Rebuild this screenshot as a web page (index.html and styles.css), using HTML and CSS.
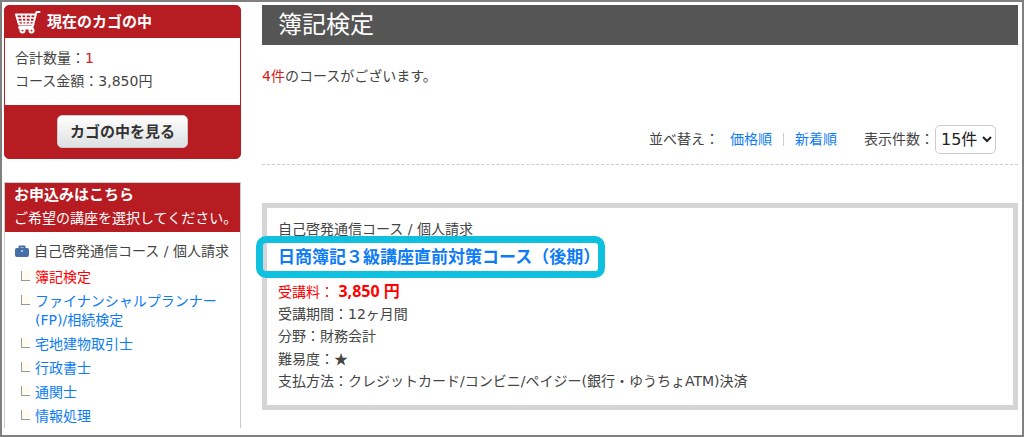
FILE: index.html
```html
<!DOCTYPE html>
<html lang="ja">
<head>
    <meta charset="UTF-8">
    <meta name="viewport" content="width=device-width, initial-scale=1.0">
    <title>簿記検定</title>
    <link rel="stylesheet" href="styles.css">
</head>
<body>

<div class="page">
    <aside class="sidebar">
        <section class="cart">
            <h2 class="cart-title">
                <svg class="cart-icon" width="26" height="24" viewBox="0 0 26 24" fill="none" stroke="#fff" stroke-width="2" stroke-linecap="round" stroke-linejoin="round">
                    <path d="M24.500 2h-3l-4 15H4.500M1 4.500h19.500M1 4.500l3 10h14.500"/>
                    <path d="M2 8h17.500M3 11.500h15.500M6.500 4.500l1.500 10M11 4.500v10M16 4.500l-1.500 10" stroke-width="1.500"/>
                    <path d="M4.500 17v1.500h13"/>
                    <circle cx="7.500" cy="20.500" r="2"/>
                    <circle cx="16.500" cy="20.500" r="2"/>
                </svg>
                現在のカゴの中
            </h2>
            <div class="cart-body">
                <div>合計数量：<span class="num">1</span></div>
                <div>コース金額：3,850円</div>
            </div>
            <div class="cart-footer">
                <button type="button" class="btn-cart">カゴの中を見る</button>
            </div>
        </section>

        <nav class="menu">
            <div class="menu-header">
                <h2>お申込みはこちら</h2>
                <p>ご希望の講座を選択してください。</p>
            </div>
            <div class="menu-body">
                <div class="menu-group">
                    <svg width="14" height="13" viewBox="0 0 14 13">
                        <path d="M4.500 3.500V1.500h5v2" fill="none" stroke="#446ea5" stroke-width="2" stroke-linejoin="round"/>
                        <rect x="0" y="3" width="14" height="9" rx="2" fill="#446ea5"/>
                        <rect x="6" y="5" width="2" height="2" fill="#a9bfdc"/>
                    </svg>
                    自己啓発通信コース / 個人請求
                </div>
                <ul class="menu-list">
                    <li><a href="#" class="current">簿記検定</a></li>
                    <li><a href="#">ファイナンシャルプランナー(FP)/相続検定</a></li>
                    <li><a href="#">宅地建物取引士</a></li>
                    <li><a href="#">行政書士</a></li>
                    <li><a href="#">通関士</a></li>
                    <li><a href="#">情報処理</a></li>
                </ul>
            </div>
        </nav>
    </aside>

    <main class="main">
        <h1>簿記検定</h1>
        <p class="count"><span class="num">4件</span>のコースがございます。</p>

        <div class="toolbar">
            <div class="sort">
                <span class="sort-label">並べ替え：</span>
                <a href="#">価格順</a>
                <span class="separator"></span>
                <a href="#">新着順</a>
            </div>
            <div class="per-page">
                <label for="perPage">表示件数：</label>
                <select id="perPage">
                    <option>15件</option>
                </select>
            </div>
        </div>

        <article class="course">
            <div>自己啓発通信コース / 個人請求</div>
            <h2 class="course-title"><a href="#">日商簿記３級講座直前対策コース（後期）</a></h2>
            <div class="price">受講料： <strong>3,850 円</strong></div>
            <div>受講期間：12ヶ月間</div>
            <div>分野：財務会計</div>
            <div>難易度：<span class="star">★</span></div>
            <div>支払方法：クレジットカード/コンビニ/ペイジー(銀行・ゆうちょATM)決済</div>
        </article>
    </main>
</div>

</body>
</html>
```
FILE: styles.css
```css
* {
    box-sizing: border-box;
}

body {
    margin: 0;
    font-family: "DejaVu Sans", "Noto Sans CJK JP", sans-serif;
    font-size: 14px;
    line-height: 23px;
    color: #444;
    background-color: #fff;
}

h1, h2, p, ul {
    margin: 0;
    padding: 0;
}

a {
    color: #0d7cf5;
    text-decoration: none;
}

.page {
    display: flex;
    align-items: flex-start;
    gap: 21px;
    min-height: 100vh;
    padding: 3px 4px 7px 2px;
    border: 2px solid #808080;
}

.num {
    color: #d02020;
}

/* sidebar */
.sidebar {
    flex: none;
    width: 237px;
}

.cart {
    background-color: #b61c22;
    border: 1px solid #b61c22;
    border-radius: 5px;
}

.cart-title {
    display: flex;
    align-items: center;
    gap: 6px;
    height: 32px;
    padding-left: 10px;
    font-size: 15px;
    color: #fff;
}

.cart-body {
    padding: 9px 10px 12px;
    background-color: #fff;
}

.cart-footer {
    display: flex;
    justify-content: center;
    padding: 10px 0;
}

.btn-cart {
    height: 33px;
    padding: 0 12px 2px;
    border: 1px solid #ccc;
    border-radius: 5px;
    background: linear-gradient(#fff, #dedfe1);
    font-family: inherit;
    font-size: 15px;
    font-weight: bold;
    color: #333;
    cursor: pointer;
}

.menu {
    margin-top: 23px;
    border: 1px solid #ccc;
    border-width: 1px 1px 0;
}

.menu-header {
    padding: 1px 0 2px 9px;
    background-color: #b61c22;
    color: #fff;
    white-space: nowrap;
}

.menu-header h2 {
    font-size: 15px;
}

.menu-body {
    padding: 8px 6px 2px 10px;
}

.menu-group {
    display: flex;
    align-items: center;
    gap: 5px;
    white-space: nowrap;
}

.menu-list {
    margin-top: 5px;
    list-style: none;
    line-height: 19px;
}

.menu-list li {
    display: flex;
    gap: 5px;
    margin-bottom: 5px;
    padding-left: 6px;
}

.menu-list li:last-child {
    margin-bottom: 0;
}

.menu-list li::before {
    content: "";
    flex: none;
    width: 8px;
    height: 9px;
    margin-top: 3px;
    border: solid #999;
    border-width: 0 0 1px 1px;
    background-color: #fffbee;
}

.menu-list .current {
    color: #f00;
}

/* main column */
.main {
    flex: 1;
    min-width: 0;
}

h1 {
    padding: 0 16px;
    background-color: #555;
    font-size: 24px;
    font-weight: normal;
    line-height: 40px;
    color: #fff;
}

.count {
    margin-top: 20px;
}

.toolbar {
    display: flex;
    justify-content: flex-end;
    align-items: center;
    gap: 27px;
    margin-top: 37px;
    padding: 0 22px 10px 0;
    border-bottom: 1px dashed #ccc;
}

.sort {
    display: flex;
    align-items: center;
}

.sort-label {
    margin-right: 11px;
}

.separator {
    width: 1px;
    height: 13px;
    margin: 0 11px;
    background-color: #ccc;
}

.per-page {
    display: flex;
    align-items: center;
    gap: 1px;
}

.per-page select {
    height: 29px;
    padding: 0 1px;
    border: 1px solid #ccc;
    border-radius: 5px;
    background-color: #fff;
    font-family: inherit;
    font-size: 16px;
    color: #222;
}

.course {
    margin-top: 38px;
    padding: 10px 11px 13px;
    border: 5px solid #d5d5d5;
    line-height: 22px;
}

.course-title {
    margin: 6px 0 12px;
    font-size: 17px;
}

.course-title a {
    position: relative;
    display: block;
    width: fit-content;
}

/* ring round the course name */
.course-title a::after {
    content: "";
    position: absolute;
    inset: -10px -5px -10px -22px;
    border: 7px solid #0fc0df;
    border-radius: 10px;
}

.price {
    color: #f00;
}

.price strong {
    font-family: "Noto Sans", "Noto Sans CJK JP", sans-serif;
    font-size: 16px;
}

.star {
    font-family: "Noto Sans CJK JP", sans-serif;
}
```
